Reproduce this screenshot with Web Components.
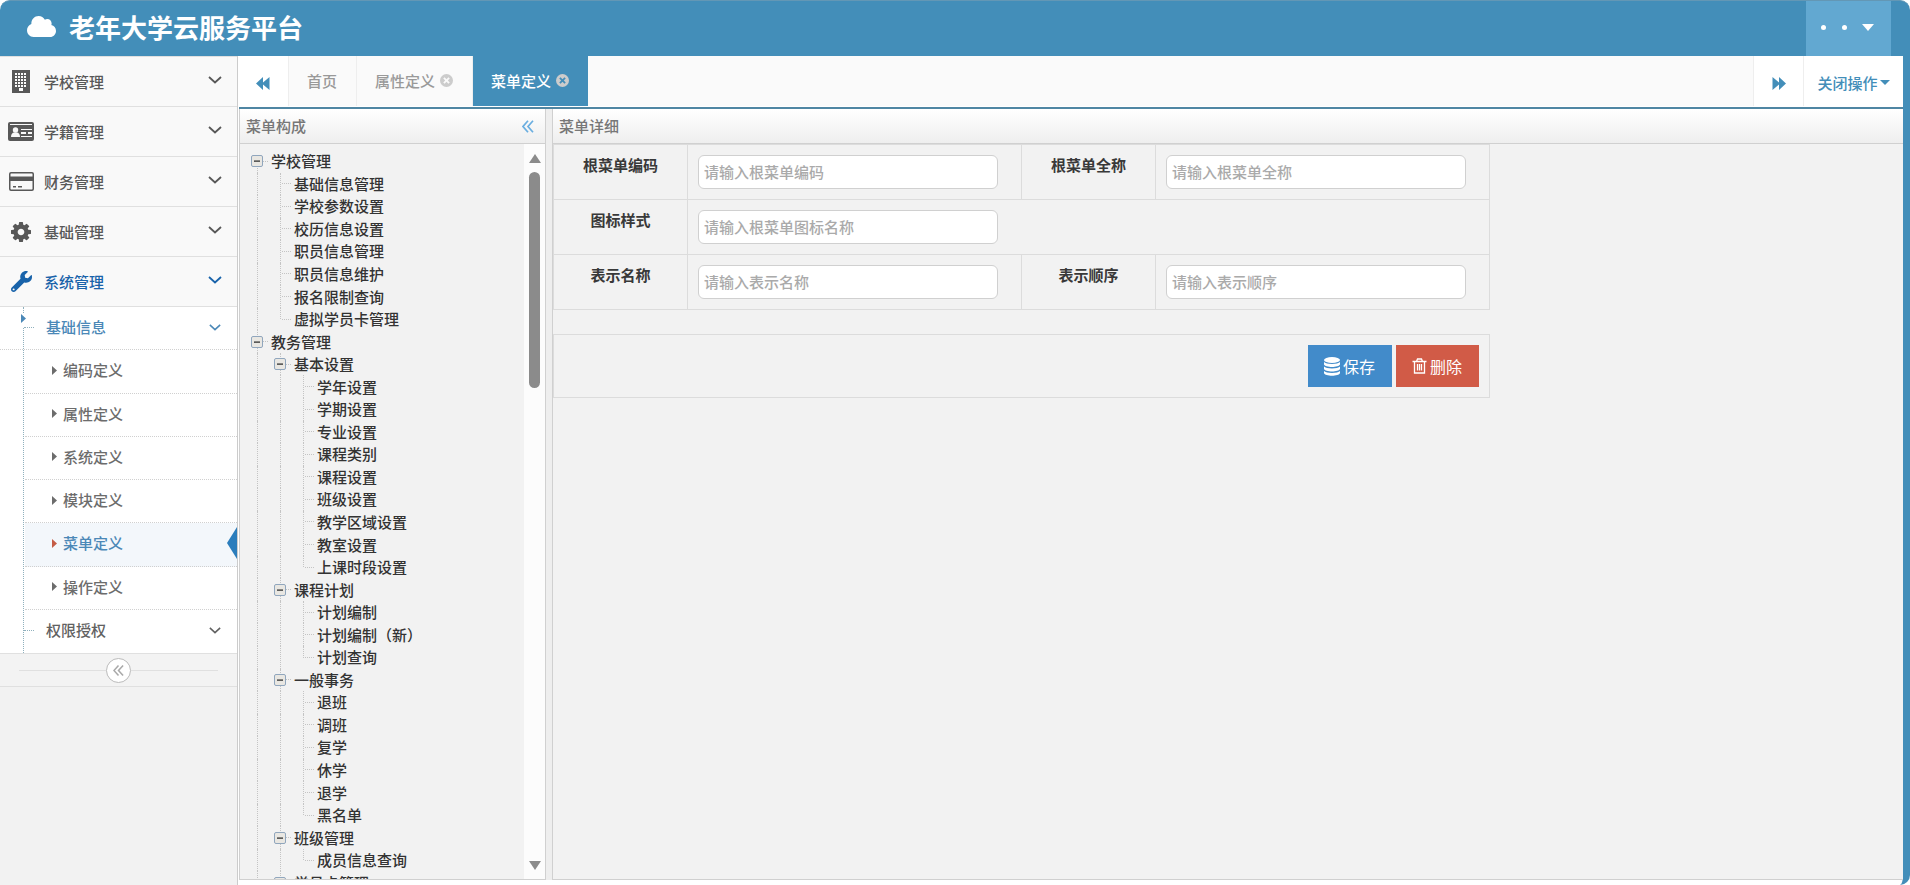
<!DOCTYPE html>
<html lang="zh-CN">
<head>
<meta charset="utf-8">
<title>老年大学云服务平台</title>
<style>
  html, body { margin: 0; height: 100%; }
  body {
    background: #fff;
    color: #393939;
    font: 500 15px/20px "Noto Sans CJK SC", sans-serif;
    --brand: #438eb9;
    --line: #d9d9d9;
    --panel: #f2f2f2;
  }
</style>
</head>
<body>
<cloud-app></cloud-app>

<script>
const define = (name, html, setup) => {
  const template = document.createElement('template');
  template.innerHTML = html;
  customElements.define(name, class extends HTMLElement {
    constructor() {
      super();
      this.attachShadow({ mode: 'open' }).append(template.content.cloneNode(true));
    }
    connectedCallback() {
      if (setup && !this.ready) { this.ready = true; setup(this, this.shadowRoot); }
    }
  });
};

/* ---------- icons ---------- */
const ICONS = {
  cloud: ['0 32 640 448', '<path d="M537.6 226.6c4.1-10.7 6.400-22.400 6.400-34.600 0-53-43-96-96-96-19.700 0-38.100 6-53.300 16.200C367 64.200 315.300 32 256 32c-88.400 0-160 71.600-160 160 0 2.700.1 5.400.2 8.100C40.200 219.800 0 273.200 0 336c0 79.500 64.500 144 144 144h368c70.700 0 128-57.300 128-128 0-61.900-44-113.600-102.400-125.400z"/>'],
  building: ['0 0 18 23', '<path d="M0 0h18v23H0z"/><g fill="#f9f9f9"><path d="M3 3h2v2H3zM6 3h2v2H6zM9 3h2v2H9zM12 3h2v2h-2zM3 6h2v2H3zM6 6h2v2H6zM9 6h2v2H9zM12 6h2v2h-2zM3 9h2v2H3zM6 9h2v2H6zM9 9h2v2H9zM12 9h2v2h-2zM3 12h2v2H3zM6 12h2v2H6zM9 12h2v2H9zM12 12h2v2h-2zM3 15h2v2H3zM12 15h2v2h-2zM6 15h2v2H6zM9 15h2v2H9zM7 18h4v3H7z"/></g>'],
  card: ['0 0 26 19', '<rect width="26" height="19" rx="2"/><g fill="#f9f9f9"><path d="M2 2h22v1H2z"/><circle cx="7.500" cy="8" r="2.700"/><path d="M3 15c0-3 1.500-4.500 3-4.500h3c1.500 0 3 1.500 3 4.500z"/><path d="M13 7h11v1H13zM13 10h5v2h-5zM20 10h4v2h-4zM13 14h11v1H13z"/></g>'],
  credit: ['0 0 25 19', '<path fill-rule="evenodd" d="M2 0h21a2 2 0 0 1 2 2v15a2 2 0 0 1-2 2H2a2 2 0 0 1-2-2V2a2 2 0 0 1 2-2zM1.500 2v2.500h22V2l-.5-.5H2zM1.500 9v8l.5.5h21l.5-.5V9z"/><path d="M4 14h3v1.500H4zM9 14h4v1.500H9z"/>'],
  cog: ['128 128 1536 1536', '<path d="M1152 896q0-106-75-181t-181-75-181 75-75 181 75 181 181 75 181-75 75-181zm512-109v222q0 12-8 23t-20 13l-185 28q-19 54-39 91 35 50 107 138 10 12 10 25t-9 23q-27 37-99 108t-94 71q-12 0-26-9l-138-108q-44 23-91 38-16 136-29 186-7 28-36 28h-222q-14 0-24.500-8.500t-11.500-21.500l-28-184q-49-16-90-37l-141 107q-10 9-25 9-14 0-25-11-126-114-165-168-7-10-7-23 0-12 8-23 15-21 51-66.500t54-70.500q-27-50-41-99l-183-27q-13-2-21-12.500t-8-23.500v-222q0-12 8-23t19-13l186-28q14-46 39-92-40-57-107-138-10-12-10-24 0-10 9-23 26-36 98.500-107.500t94.500-71.500q13 0 26 10l138 107q44-23 91-38 16-136 29-186 7-28 36-28h222q14 0 24.500 8.500t11.500 21.500l28 184q49 16 90 37l142-107q9-9 24-9 13 0 25 10 129 119 165 170 7 8 7 22 0 12-8 23-15 21-51 66.500t-54 70.500q26 50 41 98l183 28q13 2 21 12.500t8 23.500z"/>'],
  wrench: ['0 0 512 512', '<path d="M507.730 109.100c-2.240-9.030-13.540-12.090-20.120-5.510l-74.360 74.360-67.880-11.310-11.310-67.880 74.360-74.360c6.620-6.620 3.430-17.900-5.660-20.160-47.380-11.740-99.550.91-136.580 37.930-39.640 39.640-50.550 97.100-34.050 147.200L18.740 402.760c-24.990 24.990-24.990 65.510 0 90.500 24.990 24.990 65.510 24.990 90.500 0l213.210-213.210c50.120 16.710 107.470 5.680 147.370-34.220 37.070-37.070 49.700-89.320 37.910-136.730zM64 472c-13.250 0-24-10.750-24-24 0-13.260 10.750-24 24-24s24 10.740 24 24c0 13.250-10.750 24-24 24z"/>'],
  down: ['0 0 14 8', '<path d="M1 1l6 5.500L13 1" fill="none" stroke="currentColor" stroke-width="1.800"/>'],
  left2: ['0 0 12 13', '<path d="M6 .7L1 6.500l5 5.800M11 .7L6 6.500l5 5.800" fill="none" stroke="currentColor" stroke-width="1.700"/>'],
  back: ['0 0 14 13', '<path d="M7 0v5.500L13.500 0v13L7 7.500V13L0 6.500z"/>'],
  forward: ['0 0 14 13', '<path d="M7 0v5.500L.5 0v13L7 7.500V13l7-6.500z"/>'],
  caret: ['0 0 12 6', '<path d="M0 0h12L6 6z"/>'],
  right: ['0 0 5 9', '<path d="M0 0l5 4.500L0 9z"/>'],
  close: ['0 0 14 14', '<path fill-rule="evenodd" d="M7 0a7 7 0 1 1 0 14A7 7 0 0 1 7 0zM4.900 3.500L3.500 4.900 5.600 7 3.500 9.100l1.400 1.400L7 8.400l2.100 2.100 1.400-1.400L8.400 7l2.100-2.100-1.400-1.400L7 5.600z"/>'],
  db: ['0 0 16 19', '<ellipse cx="8" cy="3" rx="8" ry="3"/><path d="M0 5c2 2.600 14 2.600 16 0v2.500c-1 3.300-15 3.300-16 0zM0 9.500c2 2.600 14 2.600 16 0V12c-1 3.300-15 3.300-16 0zM0 14c2 2.600 14 2.600 16 0v2c-1 3.600-15 3.600-16 0z"/>'],
  trash: ['0 0 15 16', '<path d="M.5 3.500h14M4.500 3.500l1-2.500h4l1 2.500M2.500 3.500V15h10V3.500M5.500 6v6.500M7.500 6v6.500M9.500 6v6.500" fill="none" stroke="currentColor" stroke-width="1.300"/>'],
  minus: ['0 0 12 12', '<rect x=".5" y=".5" width="11" height="11" rx="1.500" fill="#e9e7e2" stroke="#90a6bd"/><path d="M3 5.500h6v1.200H3z" fill="#222"/>']
};
define('app-icon', `<style>:host{display:inline-flex;flex:none}svg{display:block;width:100%;height:100%;fill:currentColor}</style><svg aria-hidden="true"></svg>`,
  (host, root) => {
    const [box, body] = ICONS[host.getAttribute('name')];
    const svg = root.querySelector('svg');
    svg.setAttribute('viewBox', box);
    svg.setAttribute('preserveAspectRatio', 'none');
    svg.innerHTML = body;
  });

/* ---------- header ---------- */
define('app-header', `
<style>
  :host{display:flex;align-items:center;height:56px;box-sizing:border-box;background:var(--brand);border-top:1px solid #6397b5;border-radius:10px 10px 0 0;color:#fff;padding:0 19px 0 27px}
  h1{flex:1;margin:0;padding-bottom:4px;display:flex;align-items:center;gap:13px;font-size:26px;line-height:40px;font-weight:700}
  .cloud{width:29px;height:21px}
  button{align-self:stretch;width:85px;border:0;padding:0 17px 2px 15px;background:#62a8d1;color:#fff;display:flex;align-items:center;justify-content:space-between}
  i{width:5px;height:5px;border-radius:50%;background:#fff}
  .caret{width:12px;height:7px}
</style>
<h1><app-icon class="cloud" name="cloud"></app-icon><span>老年大学云服务平台</span></h1>
<button aria-label="用户菜单"><i></i><i></i><app-icon class="caret" name="caret"></app-icon></button>`);

/* ---------- sidebar ---------- */
define('nav-item', `
<style>
  :host{display:block}
  a{display:flex;align-items:center;box-sizing:border-box;height:50px;border-top:1px solid #e0e0e0;padding:0 15px 0 8px;background:#f9f9f9;color:#585858;text-decoration:none}
  :host([active]) a{color:#1963aa}
  .pic{width:26px;margin-right:10px;display:flex;justify-content:center}
  .text{flex:1}
  .arrow{width:14px;height:8px;margin-bottom:3px}
</style>
<a href="#"><span class="pic"></span><span class="text"><slot></slot></span><app-icon class="arrow" name="down"></app-icon></a>`,
  (host, root) => {
    const icon = document.createElement('app-icon');
    icon.setAttribute('name', host.getAttribute('icon'));
    icon.style.width = host.getAttribute('w') + 'px';
    icon.style.height = host.getAttribute('h') + 'px';
    root.querySelector('.pic').append(icon);
  });

define('side-submenu', `
<style>
  :host{display:block;background:#fff;border-top:1px solid #e0e0e0}
  ul{list-style:none;margin:0;padding:0;display:grid;grid-auto-rows:1fr;height:346px;position:relative}
  ul::before{content:"";position:absolute;left:23px;top:0;bottom:0;border-left:1px dotted #8fb0bd}
  li{display:flex;border-bottom:1px dotted #d0d0d0}
  li.leaf{margin-left:25px}
  li:last-child{border-bottom:0}
  a{flex:1;display:flex;align-items:center;padding-bottom:2px;color:#616161;text-decoration:none}
  .leaf a{padding-left:27px;gap:6px;color:#6c6c6c;position:relative}
  .leaf app-icon{width:5px;height:9px}
  .group a{padding:0 16px 2px 24px;position:relative}
  .group a::before{content:"";width:10px;margin-right:12px;border-top:1px dotted #8fb0bd}
  .group span{flex:1}
  .group a > app-icon{width:12px;height:7px}
  .group a.open{color:#4b88b7}
  .marker{position:absolute;left:21px;top:7px;width:5px;height:9px;background:#fff;border-bottom:4px solid #fff}
  .marker app-icon{width:5px;height:9px;display:block;color:#4b88b7}
  .current{background:#f3f7fb}
  .leaf.current a{color:#4b88b7}
  .current a app-icon{color:#c45c46}
  .current a::after{content:"";position:absolute;right:0;top:calc(50% - 17px);border:solid transparent;border-width:16px 10px 16px 0;border-right-color:#2b7dbc}
</style>
<ul>
  <li class="group"><a class="open" href="#"><span>基础信息</span><app-icon name="down"></app-icon><b class="marker"><app-icon name="right"></app-icon></b></a></li>
  <li class="leaf"><a href="#"><app-icon name="right"></app-icon>编码定义</a></li>
  <li class="leaf"><a href="#"><app-icon name="right"></app-icon>属性定义</a></li>
  <li class="leaf"><a href="#"><app-icon name="right"></app-icon>系统定义</a></li>
  <li class="leaf"><a href="#"><app-icon name="right"></app-icon>模块定义</a></li>
  <li class="leaf current"><a href="#"><app-icon name="right"></app-icon>菜单定义</a></li>
  <li class="leaf"><a href="#"><app-icon name="right"></app-icon>操作定义</a></li>
  <li class="group"><a href="#"><span>权限授权</span><app-icon name="down"></app-icon></a></li>
</ul>`);

define('side-nav', `
<style>
  :host{display:block;box-sizing:border-box;width:238px;background:var(--panel);border-right:1px solid #ccc;overflow:hidden}
  .fold{display:flex;align-items:center;height:32px;padding:0 19px;border:solid #e0e0e0;border-width:1px 0;background:#f3f3f3}
  .fold::before,.fold::after{content:"";flex:1;border-top:1px solid #e0e0e0}
  button{width:25px;height:25px;box-sizing:border-box;border:1px solid #bbb;border-radius:50%;background:#fff;color:#aaa;padding:0;display:flex;align-items:center;justify-content:center}
  button app-icon{width:11px;height:11px}
</style>
<nav>
  <nav-item icon="building" w="18" h="23">学校管理</nav-item>
  <nav-item icon="card" w="26" h="19">学籍管理</nav-item>
  <nav-item icon="credit" w="25" h="19">财务管理</nav-item>
  <nav-item icon="cog" w="20" h="20">基础管理</nav-item>
  <nav-item icon="wrench" w="21" h="21" active>系统管理</nav-item>
  <side-submenu></side-submenu>
</nav>
<div class="fold"><button aria-label="收起菜单"><app-icon name="left2"></app-icon></button></div>`);

/* ---------- tab bar ---------- */
define('tab-bar', `
<style>
  :host{display:flex;height:50px;background:#fafafa}
  button{border:0;margin:0;padding:0;font:inherit;background:none;color:inherit}
  .edge{width:51px;box-sizing:border-box;background:#fff;color:var(--brand);border-right:1px solid #eee;display:flex;align-items:center;justify-content:center}
  .edge app-icon{width:14px;height:13px;margin-top:5px}
  .right{border-left:1px solid #eee}
  .tabs{flex:1;display:flex}
  .tab{display:flex;align-items:center;gap:5px;padding:0 19px 1px 18px;border-right:1px solid #eee;color:#999}
  .tab.on{background:var(--brand);color:#fff;border-right:0}
  .x{display:flex;color:#ccc}
  .x app-icon{width:13px;height:13px}
  .ops{width:99px;background:#fff;color:var(--brand);display:flex;align-items:center;justify-content:center;gap:2px;padding-top:3px}
  .ops app-icon{width:10px;height:5px}
</style>
<button class="edge" aria-label="向左"><app-icon name="back"></app-icon></button>
<div class="tabs">
  <div class="tab"><button>首页</button></div>
  <div class="tab"><button>属性定义</button><button class="x" aria-label="关闭属性定义"><app-icon name="close"></app-icon></button></div>
  <div class="tab on"><button>菜单定义</button><button class="x" aria-label="关闭菜单定义"><app-icon name="close"></app-icon></button></div>
</div>
<button class="edge right" aria-label="向右"><app-icon name="forward"></app-icon></button>
<button class="ops">关闭操作<app-icon name="caret"></app-icon></button>`);

/* ---------- panel ---------- */
define('app-panel', `
<style>
  :host{display:flex;flex-direction:column;min-width:0;min-height:0;border:1px solid #d0d0d0;border-top:0;background:var(--panel)}
  header{flex:none;box-sizing:border-box;height:35px;padding:0 11px 0 6px;display:flex;align-items:center;justify-content:space-between;color:#777;background:linear-gradient(#fff,#eee);border-bottom:1px solid #d0d0d0}
  .body{flex:1;min-height:0;overflow:hidden;display:flex;flex-direction:column}
</style>
<header><slot name="title"></slot><slot name="tool"></slot></header>
<div class="body"><slot></slot></div>`);

/* ---------- tree ---------- */
const TREE = [
  [0, '学校管理'], [1, '基础信息管理'], [1, '学校参数设置'], [1, '校历信息设置'], [1, '职员信息管理'],
  [1, '职员信息维护'], [1, '报名限制查询'], [1, '虚拟学员卡管理'],
  [0, '教务管理'], [1, '基本设置'], [2, '学年设置'], [2, '学期设置'], [2, '专业设置'], [2, '课程类别'],
  [2, '课程设置'], [2, '班级设置'], [2, '教学区域设置'], [2, '教室设置'], [2, '上课时段设置'],
  [1, '课程计划'], [2, '计划编制'], [2, '计划编制（新）'], [2, '计划查询'],
  [1, '一般事务'], [2, '退班'], [2, '调班'], [2, '复学'], [2, '休学'], [2, '退学'], [2, '黑名单'],
  [1, '班级管理'], [2, '成员信息查询'], [1, '学员卡管理']
];
define('menu-tree', `
<style>
  :host{display:flex;flex:1;min-height:0;overflow:hidden}
  .view{flex:1;overflow:hidden;min-height:0}
  ul{list-style:none;margin:0;padding:6px 0 0 11px;display:grid;grid-auto-rows:1fr;height:744px;color:#333}
  li{display:flex}
  .cell{width:23px;flex:none;display:grid;align-items:center;position:relative}
  .branch{width:20px}
  .line::before{content:"";position:absolute;left:6px;top:0;bottom:0;border-left:1px dotted #c4c4c4}
  .first::before{top:11px}
  .last::before{bottom:11px}
  .branch::after{content:"";grid-area:1/1;margin:0 3px 0 8px;border-top:1px dotted #c4c4c4}
  .cell button{grid-area:1/1;position:relative;z-index:1;border:0;padding:0;background:none;width:12px;height:12px;display:flex}
  button app-icon{width:12px;height:12px}
  span{align-self:center;white-space:nowrap}
  .bar{width:21px;flex:none;background:#fcfcfc;color:#8b8b8b;display:flex;flex-direction:column;align-items:center;padding:10px 0 9px;box-sizing:border-box}
  .bar app-icon{width:12px;height:9px}
  .bar .up{transform:rotate(180deg)}
  .rail{flex:1;margin:9px 0;display:flex}
  .rail i{width:11px;height:216px;border-radius:6px;background:#8b8b8b}
</style>
<div class="view"><ul role="tree"></ul></div>
<div class="bar"><app-icon class="up" name="caret"></app-icon><div class="rail"><i></i></div><app-icon name="caret"></app-icon></div>`,
  (host, root) => {
    const ul = root.querySelector('ul');
    const isParent = i => TREE[i + 1] ? TREE[i + 1][0] > TREE[i][0] : true;
    // true when a later row on this level still belongs to the same parent
    const continues = (i, level) => {
      for (let k = i + 1; k < TREE.length; k++) {
        if (TREE[k][0] < level) return false;
        if (TREE[k][0] === level) return true;
      }
      return true;
    };
    TREE.forEach(([level, text], i) => {
      const li = document.createElement('li');
      li.setAttribute('role', 'treeitem');
      li.setAttribute('aria-level', level + 1);
      for (let l = 0; l <= level; l++) {
        const own = l === level;
        const more = l === 0 || continues(i, l);
        const cell = document.createElement('div');
        cell.className = 'cell';
        if (more || own) cell.classList.add('line');
        if (own) {
          cell.classList.add('branch');
          if (i === 0) cell.classList.add('first');
          if (!more) cell.classList.add('last');
          if (isParent(i)) cell.innerHTML = '<button aria-label="收起"><app-icon name="minus"></app-icon></button>';
        }
        li.append(cell);
      }
      const span = document.createElement('span');
      span.textContent = text;
      li.append(span);
      ul.append(li);
    });
  });

/* ---------- form ---------- */
define('menu-form', `
<style>
  :host{display:block}
  form{max-width:937px}
  table{width:100%;border-collapse:collapse;table-layout:fixed}
  th,td{border:1px solid #dcdcdc;padding:10px;height:34px;text-align:left;vertical-align:top}
  th{width:113px;text-align:center;font-weight:700}
  input{display:block;box-sizing:border-box;width:300px;max-width:100%;height:34px;border:1px solid #d0d0d0;border-radius:6px;padding:0 5px 2px;background:#fff;font:inherit;color:#393939}
  input::placeholder{color:#aaa;opacity:1}
  .actions{box-sizing:border-box;height:64px;margin-top:24px;border:1px solid #dcdcdc;padding:10px;display:flex;justify-content:flex-end;gap:4px}
  button{height:42px;border:0;padding:0 17px 0 16px;display:flex;align-items:center;gap:3px;font:inherit;font-size:16px;font-weight:400;color:#fff;background:#428bca}
  .del{background:#d15b47}
  .i1{width:16px;height:19px}
  .i2{width:15px;height:16px}
</style>
<form>
  <table>
    <tr><th><label for="code">根菜单编码</label></th><td><input id="code" placeholder="请输入根菜单编码"></td>
        <th><label for="full">根菜单全称</label></th><td><input id="full" placeholder="请输入根菜单全称"></td></tr>
    <tr><th><label for="icon">图标样式</label></th><td colspan="3"><input id="icon" placeholder="请输入根菜单图标名称"></td></tr>
    <tr><th><label for="name">表示名称</label></th><td><input id="name" placeholder="请输入表示名称"></td>
        <th><label for="order">表示顺序</label></th><td><input id="order" placeholder="请输入表示顺序"></td></tr>
  </table>
  <div class="actions">
    <button type="button"><app-icon class="i1" name="db"></app-icon>保存</button>
    <button type="button" class="del"><app-icon class="i2" name="trash"></app-icon>删除</button>
  </div>
</form>`);

/* ---------- page ---------- */
define('cloud-app', `
<style>
  :host{display:flex;flex-direction:column;height:100vh}
  .main{flex:1;min-height:0;display:flex;border-right:7px solid var(--brand);border-radius:0 0 10px 0}
  .work{flex:1;min-width:0;display:flex;flex-direction:column}
  .panels{flex:1;min-height:0;display:flex;gap:6px;margin:1px 0 5px 1px;background:#eee;border-top:2px solid #4f86a3}
  .left{width:305px;flex:none}
  .right{flex:1;border-right:0}
  .tool{border:0;background:none;padding:0;color:#6aaee0;display:flex}
  .tool app-icon{width:12px;height:13px}
</style>
<app-header></app-header>
<div class="main">
  <side-nav></side-nav>
  <div class="work">
    <tab-bar></tab-bar>
    <div class="panels">
      <app-panel class="left"><span slot="title">菜单构成</span><button class="tool" slot="tool" aria-label="折叠"><app-icon name="left2"></app-icon></button><menu-tree></menu-tree></app-panel>
      <app-panel class="right"><span slot="title">菜单详细</span><menu-form></menu-form></app-panel>
    </div>
  </div>
</div>`);
</script>
</body>
</html>
